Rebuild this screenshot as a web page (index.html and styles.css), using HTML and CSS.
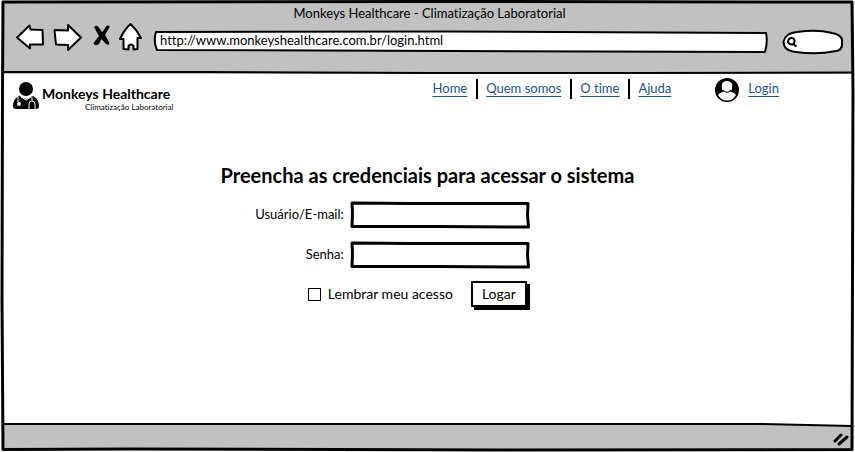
FILE: index.html
```html
<!DOCTYPE html>
<html lang="pt-BR">
<head>
<meta charset="utf-8">
<meta name="viewport" content="width=device-width, initial-scale=1">
<title>Monkeys Healthcare - Climatização Laboratorial</title>
<link rel="stylesheet" href="styles.css">
</head>
<body>
<div class="window">
  <div class="chrome">
    <svg class="sketch" viewBox="0 0 855 74" preserveAspectRatio="none" aria-hidden="true">
      <path d="M0 72H200L430 73H640L855 72.500"/>
    </svg>
    <div class="window-title">Monkeys Healthcare - Climatização Laboratorial</div>
    <div class="toolbar">
      <button class="tool" type="button" aria-label="Voltar">
        <svg width="31" height="30" viewBox="0 0 31 30"><path class="outline" d="M2 15.500L14.500 3.500L15.500 7.500L27.500 8L28 22.500L15 22.500V26.500Z"/></svg>
      </button>
      <button class="tool" type="button" aria-label="Avançar">
        <svg width="31" height="30" viewBox="0 0 31 30"><path class="outline" d="M1.500 8L15 8.500V3L28 15.500L15 28V23L3 22.500Z"/></svg>
      </button>
      <button class="tool stop" type="button" aria-label="Parar">
        <svg width="19" height="30" viewBox="0 0 19 30"><path d="M1 5Q4 2 6 6L9.500 10L12 6Q14 2 17 4.500L12 13L16 20Q17 24 13 22L8.500 17L6 22Q2 25 .5 21L6 14Z"/></svg>
      </button>
      <button class="tool home" type="button" aria-label="Início">
        <svg width="25" height="30" viewBox="0 0 25 30"><path class="outline" d="M11.500 2Q18 8 22 16H18.500L18.500 27L14.500 27.500V24Q12 21 9.500 24V27.500L4.500 27V17H1Q5 8 11.500 2Z"/></svg>
      </button>
      <div class="address">
        <svg class="sketch white" viewBox="0 0 616 24" preserveAspectRatio="none" aria-hidden="true"><path d="M3 2L300 1.500L614 3Q616 12 613 22L300 21L4 20Q0 11 3 2Z"/></svg>
        <input type="text" aria-label="Endereço" value="http://www.monkeyshealthcare.com.br/login.html">
      </div>
      <div class="search">
        <svg class="sketch white" viewBox="0 0 62 26" preserveAspectRatio="none" aria-hidden="true"><path d="M15 3Q35 0 50 4Q61 6 60 13Q61 21 54 22Q35 26 14 23Q2 22 1.500 13Q3 4 15 3Z"/></svg>
        <svg class="lens" width="12" height="12" viewBox="0 0 12 12" aria-hidden="true"><path class="stroke" d="M8.500 4.500Q9 8 5.500 8.500Q2 8 2 5Q3 1.500 6 2Q8 2 8.500 4.500ZM7 8L10.500 10.500"/></svg>
        <input type="search" aria-label="Pesquisar">
      </div>
    </div>
  </div>

  <div class="page">
    <header class="site-header">
      <div class="brand">
        <svg width="26" height="28" viewBox="0 0 26 28" aria-hidden="true">
          <circle cx="13" cy="7" r="7"/>
          <path d="M6 14L13 17L20 14Q26 17 26 24Q26 27 23 27H3Q0 27 0 24Q0 17 6 14Z"/>
          <path class="cut" d="M5 15V20M19 15V19M16 27V22Q16 19 18.500 19Q22 19 22 22V27M8 15L13 18L18 15"/>
          <circle class="hole" cx="6" cy="22" r="2"/>
        </svg>
        <div class="brand-text">
          <strong>Monkeys Healthcare</strong>
          <span>Climatização Laboratorial</span>
        </div>
      </div>
      <nav class="nav">
        <a href="#">Home</a>
        <a href="#">Quem somos</a>
        <a href="#">O time</a>
        <a href="#">Ajuda</a>
      </nav>
      <div class="account">
        <svg width="24" height="24" viewBox="0 0 24 24" aria-hidden="true">
          <circle cx="12" cy="12" r="12"/>
          <path class="hole" d="M7 6Q8 3 12 3Q16 3 17 6Q18 11 15 14Q19 14 21 17Q18 22.500 12 22.500Q6 22.500 3 17Q5 14 9 14Q6 11 7 6Z"/>
          <path class="smile" d="M8 12Q12 16.500 16 12"/>
        </svg>
        <a href="#">Login</a>
      </div>
    </header>

    <main>
      <h1>Preencha as credenciais para acessar o sistema</h1>
      <form class="login">
        <label for="user">Usuário/E-mail:</label>
        <div class="field">
          <svg class="sketch box" viewBox="0 0 180 28" preserveAspectRatio="none" aria-hidden="true"><path d="M2 2L60 2.500L178 2.500L177.500 14L178.500 26L90 25.500L2 25.500L2.500 12Z"/></svg>
          <input id="user" type="text">
        </div>
        <label for="password">Senha:</label>
        <div class="field">
          <svg class="sketch box" viewBox="0 0 180 28" preserveAspectRatio="none" aria-hidden="true"><path d="M2 2L60 2.500L178 2.500L177.500 14L178.500 26L90 25.500L2 25.500L2.500 12Z"/></svg>
          <input id="password" type="password">
        </div>
        <div class="actions">
          <label class="remember"><input type="checkbox">Lembrar meu acesso</label>
          <button class="submit" type="submit">Logar</button>
        </div>
      </form>
    </main>
  </div>

  <div class="statusbar">
    <svg class="sketch" viewBox="0 0 855 28" preserveAspectRatio="none" aria-hidden="true">
      <path class="paper" d="M0 0H855V4L765 2L0 2Z"/>
      <path d="M0 2L765 2L855 4"/>
    </svg>
    <svg class="grip" width="16" height="14" viewBox="0 0 16 14" aria-hidden="true"><path d="M2 9L8 3M6 12L14 5"/></svg>
  </div>
  <svg class="sketch frame" viewBox="0 0 855 452" preserveAspectRatio="none" aria-hidden="true">
    <path d="M3 2L430 1.500L852 2L853 90L852 449.500L500 450L130 449L3 449.500L2 300L2.500 90Z"/>
  </svg>
</div>
</body>
</html>
```
FILE: styles.css
```css
* {
  box-sizing: border-box;
}

body {
  margin: 0;
  background: #fff;
  color: #000;
  font: 13px/18px Lato, "Open Sans", sans-serif;
  font-variant-ligatures: none;
}

input,
button {
  font: inherit;
  color: inherit;
}

a {
  color: #1a5296;
  text-underline-offset: 3px;
}

.window {
  position: relative;
  display: flex;
  flex-direction: column;
  min-height: 100vh;
  padding: 2px 3px;
}

.sketch {
  position: absolute;
  inset: 0;
  width: 100%;
  height: 100%;
  fill: none;
  stroke: #000;
  stroke-width: 2;
  stroke-linejoin: round;
  pointer-events: none;
}

.white {
  fill: #fff;
}

.frame,
.box {
  stroke-width: 3;
}

.chrome {
  position: relative;
  padding: 2px 8px 20px 12px;
  background: #c1c1c1;
}

.window-title {
  text-align: center;
}

.toolbar {
  display: flex;
  align-items: center;
  gap: 7px;
  height: 32px;
}

.tool {
  display: flex;
  margin-bottom: 2px;
  padding: 0;
  border: 0;
  background: none;
}

.stop {
  margin-left: 2px;
}

.outline {
  fill: #fff;
  stroke: #000;
  stroke-width: 2;
  stroke-linejoin: round;
}

.address,
.search {
  position: relative;
  display: flex;
  align-items: center;
}

.address {
  flex: 1;
  height: 24px;
  margin: 7px 7px 0 2px;
}

.search {
  width: 62px;
  height: 26px;
  margin-top: 7px;
}

.address input,
.search input,
.field input {
  position: relative;
  width: 100%;
  border: 0;
  background: none;
  outline: 0;
}

.address input {
  padding: 0 7px 3px;
}

.search input {
  padding: 0 8px 0 0;
}

.lens {
  position: relative;
  flex: none;
  margin-left: 4px;
}

.stroke {
  fill: none;
  stroke: #000;
  stroke-width: 2;
}

.page {
  flex: 1;
}

.site-header {
  display: flex;
  align-items: flex-start;
  padding: 4px 73px 0 10px;
}

.brand {
  display: flex;
  gap: 3px;
  margin: 4px auto 0 0;
}

.brand-text {
  display: flex;
  flex-direction: column;
  padding-top: 3px;
}

.brand-text strong {
  font-size: 14px;
}

.brand-text span {
  margin-left: 43px;
  font-size: 8px;
  line-height: 8px;
}

.hole {
  fill: #fff;
}

.cut {
  fill: none;
  stroke: #fff;
  stroke-width: 1;
}

.smile {
  fill: none;
  stroke: #000;
  stroke-width: 1;
}

.nav {
  display: flex;
  margin-top: 1px;
}

.nav a {
  margin: 0 9px;
}

.nav a + a::before {
  content: "";
  float: left;
  width: 2px;
  height: 20px;
  margin: 0 8px 0 -10px;
  background: #000;
}

.nav a + a {
  margin-left: 10px;
}

.account {
  display: flex;
  gap: 9px;
  margin-left: 35px;
}

.account a {
  margin-top: 1px;
}

h1 {
  margin: 52px 0 14px;
  font-size: 20px;
  line-height: 24px;
  text-align: center;
}

.login {
  display: grid;
  grid-template-columns: auto 180px;
  justify-content: center;
  align-items: center;
  gap: 12px 6px;
  padding-right: 70px;
}

.login > label {
  padding-bottom: 2px;
  text-align: right;
}

.field {
  position: relative;
  height: 28px;
}

.field input {
  height: 100%;
  padding: 4px 8px;
}

.actions {
  grid-column: 1 / -1;
  display: flex;
  justify-content: flex-end;
  align-items: center;
  gap: 18px;
  padding-right: 3px;
  font-size: 14px;
}

.remember {
  display: flex;
  align-items: center;
  gap: 7px;
}

.remember input {
  appearance: none;
  width: 13px;
  height: 13px;
  margin: 0;
  border: 1px solid #000;
}

.remember input:checked {
  background: #000;
}

.submit {
  padding: 2px 9px;
  border: 2px solid #000;
  background: #fff;
  box-shadow: 3px 3px 0 #000;
}

.statusbar {
  position: relative;
  display: flex;
  justify-content: flex-end;
  align-items: center;
  height: 28px;
  padding: 6px 3px 0 0;
  background: #c1c1c1;
}

.paper {
  fill: #fff;
  stroke: none;
}

.grip {
  position: relative;
  fill: none;
  stroke: #000;
  stroke-width: 3;
  stroke-linecap: round;
}
```
